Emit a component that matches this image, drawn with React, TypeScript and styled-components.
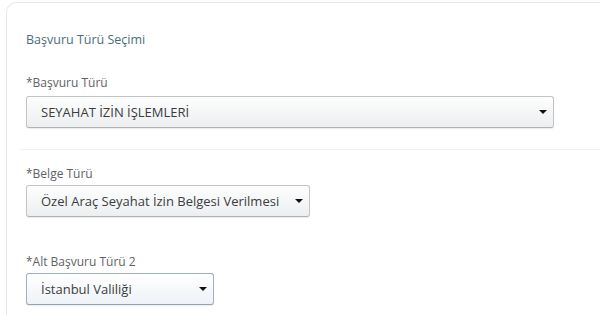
import React from 'react';
import styled, { createGlobalStyle } from 'styled-components';

const GlobalStyle = createGlobalStyle`
  html, body {
    margin: 0;
    padding: 0;
    background: #ffffff;
    font-family: "Open Sans", "Noto Sans", sans-serif;
  }
`;

const Page = styled.div`
  width: 600px;
  height: 315px;
  overflow: hidden;
  padding: 2px 0 0 6px;
  box-sizing: border-box;
`;

const Card = styled.div`
  border: 1px solid #e6e8e9;
  border-right: none;
  border-bottom: none;
  border-radius: 10px 0 0 0;
  padding: 28px 0 20px 19px;
  height: 400px;
  box-sizing: border-box;
`;

const Title = styled.div`
  font-size: 12.5px;
  line-height: 18px;
  color: #4b6d7b;
  margin-bottom: 25px;
`;

const FormGroup = styled.div<{ gap?: number }>`
  display: flex;
  flex-direction: column;
  margin-top: ${p => p.gap ?? 0}px;
`;

const Label = styled.label<{ tight?: boolean }>`
  font-size: 12px;
  line-height: 17px;
  color: #5e6266;
  margin-bottom: ${p => (p.tight ? 3 : 5)}px;
`;

const Select = styled.div<{ width: number; focused?: boolean }>`
  position: relative;
  width: ${p => p.width}px;
  height: 32px;
  box-sizing: border-box;
  border: 1px solid ${p => (p.focused ? '#9fb0c4' : '#c2c4c6')};
  border-bottom-color: ${p => (p.focused ? '#8fa2b8' : '#b0b2b4')};
  border-radius: 3px;
  background: ${p =>
    p.focused
      ? 'linear-gradient(to bottom, #ffffff 0%, #eef2f7 100%)'
      : 'linear-gradient(to bottom, #fefefe 0%, #eceef0 100%)'};
  box-shadow: 0 1px 1px rgba(0, 0, 0, 0.08);
  display: flex;
  align-items: center;
  padding: 0 26px 0 14px;
  font-size: 13px;
  color: #3a3d40;
  white-space: nowrap;
`;

const Caret = styled.span`
  position: absolute;
  right: 6px;
  top: 50%;
  margin-top: -2px;
  width: 0;
  height: 0;
  border-left: 4px solid transparent;
  border-right: 4px solid transparent;
  border-top: 4px solid #111;
`;

const Divider = styled.div`
  height: 1px;
  background: #f1f2f3;
  margin: 21px 0 15px -6px;
`;

export default function App() {
  return (
    <Page>
      <GlobalStyle />
      <Card>
        <Title>Başvuru Türü Seçimi</Title>
        <FormGroup>
          <Label>*Başvuru Türü</Label>
          <Select width={528}>
            SEYAHAT İZİN İŞLEMLERİ
            <Caret />
          </Select>
        </FormGroup>
        <Divider />
        <FormGroup>
          <Label tight>*Belge Türü</Label>
          <Select width={284}>
            Özel Araç Seyahat İzin Belgesi Verilmesi
            <Caret />
          </Select>
        </FormGroup>
        <FormGroup gap={36}>
          <Label tight>*Alt Başvuru Türü 2</Label>
          <Select width={188} focused>
            İstanbul Valiliği
            <Caret />
          </Select>
        </FormGroup>
      </Card>
    </Page>
  );
}
